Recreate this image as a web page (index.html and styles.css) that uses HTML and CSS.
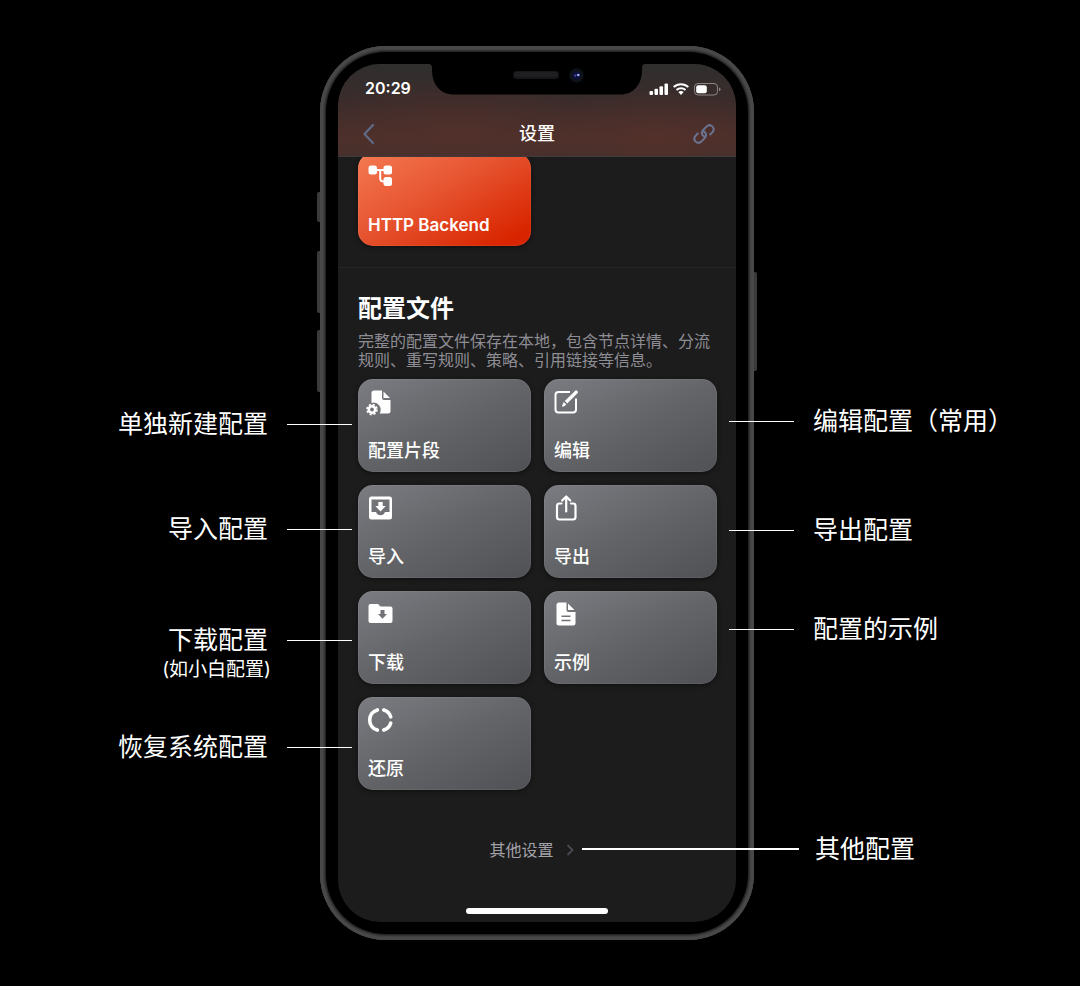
FILE: index.html
```html
<!DOCTYPE html>
<html lang="zh-CN">
<head>
<meta charset="utf-8">
<meta name="viewport" content="width=device-width, initial-scale=1">
<title>设置</title>
<link rel="stylesheet" href="styles.css">
</head>
<body>
<main class="stage">
  <div class="phone">
    <span class="key key-mute"></span>
    <span class="key key-up"></span>
    <span class="key key-down"></span>
    <span class="key key-power"></span>

    <div class="screen">
      <svg class="notch" viewBox="0 0 216 32" aria-hidden="true">
        <path d="M0 0H216Q213 0 213 4V6C213 20 205 30.500 191 30.500H25C11 30.500 3 20 3 6V4Q3 0 0 0Z" fill="#000"/>
        <rect x="84" y="7" width="46" height="8" rx="4" fill="#17171a"/>
        <rect x="85" y="8" width="44" height="5" rx="2.500" fill="#1f1f21"/>
        <circle cx="147.500" cy="11.500" r="7.200" fill="#0d1118"/>
        <circle cx="147.500" cy="11.500" r="4" fill="#0b0f35"/>
        <circle cx="146.200" cy="11.500" r="1.200" fill="#4a3a9a"/>
        <circle cx="149.300" cy="11" r="1.300" fill="#9fb2ff"/>
      </svg>

      <header class="topbar">
        <div class="status">
          <span class="time">20:29</span>
          <svg class="signals" viewBox="0 0 72 14" aria-hidden="true">
            <g fill="#fff">
              <rect x="0.500" y="9" width="3.500" height="4" rx="1"/>
              <rect x="5.500" y="6.800" width="3.500" height="6.200" rx="1"/>
              <rect x="10.500" y="4.200" width="3.500" height="8.800" rx="1"/>
              <rect x="15.500" y="1.500" width="3.500" height="11.500" rx="1"/>
              <path d="M32 8.900a4.100 4.100 0 0 1 2.700 1L32 12.900l-2.700-3a4.100 4.100 0 0 1 2.700-1Z"/>
            </g>
            <path d="M24.700 5.100a10.700 10.700 0 0 1 14.600 0M27.500 8a6.700 6.700 0 0 1 9 0" fill="none" stroke="#fff" stroke-width="2"/>
            <rect x="45.500" y="1.500" width="23" height="11.500" rx="3.500" fill="none" stroke="#8d8584"/>
            <rect x="47.200" y="3.200" width="10.600" height="8.100" rx="2" fill="#fff"/>
            <path d="M70 5.500v3.700q1.500-.5 1.500-1.850T70 5.500Z" fill="#8d8584"/>
          </svg>
        </div>
        <nav class="nav">
          <button class="nav-button" type="button" aria-label="返回">
            <svg class="nav-icon" viewBox="0 0 24 24"><path d="M16 3 7.500 12l8.500 9" fill="none" stroke="#606b8a" stroke-width="2.200" stroke-linecap="round" stroke-linejoin="round"/></svg>
          </button>
          <h1 class="title">设置</h1>
          <button class="nav-button" type="button" aria-label="链接">
            <svg class="nav-icon" viewBox="0 0 24 24"><g fill="none" stroke="#6b7390" stroke-width="2" stroke-linecap="round" stroke-linejoin="round"><path d="M11.700 14.800C8.900 13.800 8 10.300 10 8.200l3.700-3.800c3.800-3.500 9.200 1.600 5.800 5.700l-2.300 2.400"/><path d="M10.300 9.200c2.800 1 3.700 4.500 1.700 6.600l-3.700 3.800c-3.800 3.500-9.200-1.600-5.800-5.700l2.300-2.400"/></g></svg>
          </button>
        </nav>
      </header>

      <section class="backend">
        <div class="grid">
          <button class="card card-red" type="button">
            <svg class="icon" viewBox="0 0 24 24" fill="#fff"><rect x="0.500" y="1.500" width="8.500" height="9" rx="2.500"/><rect x="15.500" y="1.500" width="8.500" height="9" rx="2.500"/><rect x="15.500" y="13" width="8.500" height="9" rx="2.500"/><path d="M8.500 6H16M12.200 6v8.500q0 3 3.800 3" fill="none" stroke="#fff" stroke-width="2"/></svg>
            <span class="latin">HTTP Backend</span>
          </button>
        </div>
      </section>

      <section class="profile">
        <h2 class="heading">配置文件</h2>
        <p class="description">完整的配置文件保存在本地，包含节点详情、分流规则、重写规则、策略、引用链接等信息。</p>
        <div class="grid">
          <button class="card" type="button">
            <svg class="icon" viewBox="0 0 24 24"><path d="M6 .5h8V8a2 2 0 0 0 2 2h6.500v11a2.500 2.500 0 0 1-2.500 2.500h-8.500A7 7 0 0 0 3.500 13V3A2.500 2.500 0 0 1 6 .5ZM15.500 1.500V8H22Z" fill="#fff"/><circle cx="4" cy="19.500" r="3.200" fill="none" stroke="#fff" stroke-width="2.600"/><circle cx="4" cy="19.500" r="5" fill="none" stroke="#fff" stroke-width="1.600" stroke-dasharray="2.200 1.727"/></svg>
            <span>配置片段</span>
          </button>
          <button class="card" type="button">
            <svg class="icon" viewBox="0 0 24 24"><path d="M16 2H4.500q-3 0-3 3v14.500q0 3 3 3H19q3 0 3-3V8.500" fill="none" stroke="#fff" stroke-width="2"/><path d="M23.300.900a1.600 1.600 0 0 0-2.300 0L10.800 11.100l2.400 2.400L23.500 3.200a1.600 1.600 0 0 0-.2-2.300ZM9.800 12l2.500 2.500-2.100 1.800q-1.800.8-2.200-.200Z" fill="#fff"/></svg>
            <span>编辑</span>
          </button>
          <button class="card" type="button">
            <svg class="icon" viewBox="0 0 24 24"><path fill-rule="evenodd" d="M3.500.5h18A2.500 2.500 0 0 1 24 3v18a2.500 2.500 0 0 1-2.500 2.500h-18A2.500 2.500 0 0 1 1 21V3A2.500 2.500 0 0 1 3.500.5ZM3.500 3.500V16H8q1.300 3.200 4.500 3.200T17 16h4.500V3.500Z" fill="#fff"/><path d="M10.300 6h4.400v4h3L12.500 15.500 7.300 10h3Z" fill="#fff"/></svg>
            <span>导入</span>
          </button>
          <button class="card" type="button">
            <svg class="icon" viewBox="0 0 24 24"><path d="M7.500 7.500h-2Q3 7.500 3 10v11q0 2.500 2.500 2.500h13.500q2.500 0 2.500-2.500V10q0-2.500-2.500-2.500h-2M12.200 15.500V1M8.200 4.500l4-4 4 4" fill="none" stroke="#fff" stroke-width="2.200" stroke-linecap="round" stroke-linejoin="round"/></svg>
            <span>导出</span>
          </button>
          <button class="card" type="button">
            <svg class="icon" viewBox="0 0 24 24"><path fill-rule="evenodd" d="M2.500 2H10l2.500 2.500h10a2 2 0 0 1 2 2V19a2 2 0 0 1-2 2h-20a2 2 0 0 1-2-2V4a2 2 0 0 1 2-2ZM12.500 8v4H10l4.500 4.800 4.500-4.800h-2.500V8Z" fill="#fff"/></svg>
            <span>下载</span>
          </button>
          <button class="card" type="button">
            <svg class="icon" viewBox="0 0 24 24"><path fill-rule="evenodd" d="M5 .5h7.500V8a2 2 0 0 0 2 2h7v11a2.500 2.500 0 0 1-2.500 2.500H5A2.500 2.500 0 0 1 2.500 21V3A2.500 2.500 0 0 1 5 .5ZM14 1.500V8h6.500ZM7.500 13.500V15h9v-1.500ZM7.500 17.700v1.500h9v-1.500Z" fill="#fff"/></svg>
            <span>示例</span>
          </button>
          <button class="card" type="button">
            <svg class="icon" viewBox="0 0 24 24"><g fill="none" stroke="#fff" stroke-width="3.600" stroke-linecap="round"><path d="M9.300 1.900A10.500 10.500 0 0 0 9.300 22.100"/><path d="M15.800 2.100a10.300 10.300 0 0 1 6.900 6.700"/><path d="M15.800 21.900a10.300 10.300 0 0 0 6.900-6.700"/></g></svg>
            <span>还原</span>
          </button>
        </div>
      </section>

      <a class="more" href="#">
        <span>其他设置</span>
        <svg class="chevron" viewBox="0 0 8 12"><path d="m1.500 1 5 5-5 5" fill="none" stroke="#4a4952" stroke-width="1.800"/></svg>
      </a>
      <div class="home"></div>
    </div>

    <p class="note note-left note-snippet">单独新建配置</p>
    <p class="note note-left note-import">导入配置</p>
    <p class="note note-left note-download">下载配置</p>
    <p class="subnote">(如小白配置)</p>
    <p class="note note-left note-restore">恢复系统配置</p>
    <p class="note note-right note-edit">编辑配置（常用）</p>
    <p class="note note-right note-export">导出配置</p>
    <p class="note note-right note-sample">配置的示例</p>
    <p class="note note-right note-other">其他配置</p>
  </div>
</main>
</body>
</html>
```

FILE: styles.css
```css
* {
  box-sizing: border-box;
}

body {
  margin: 0;
  background: #000;
  color: #fff;
  font-family: Inter, "Noto Sans CJK SC", sans-serif;
}

h1, h2, p {
  margin: 0;
}

button {
  border: 0;
  padding: 0;
  background: none;
  color: inherit;
  font: inherit;
}

.stage {
  display: flex;
  justify-content: center;
  min-height: 100vh;
  padding: 46px 6px 46px 0;
}

.phone {
  position: relative;
  flex: none;
  width: 434px;
  padding: 18px;
  border-radius: 66px;
  background: #000;
  box-shadow: inset 0 0 0 3px #484848, inset 0 0 0 4px #404040, inset 0 0 0 5px #343434, inset 0 0 0 6px #242424;
}

.key {
  position: absolute;
  left: -3px;
  width: 3px;
  border-radius: 2px 0 0 2px;
  background: #3a3a3a;
}

.key-mute {
  top: 146px;
  height: 30px;
}

.key-up {
  top: 205px;
  height: 62px;
}

.key-down {
  top: 284px;
  height: 62px;
}

.key-power {
  top: 226px;
  left: 100%;
  height: 99px;
  border-radius: 0 2px 2px 0;
}

.screen {
  position: relative;
  display: flex;
  flex-direction: column;
  overflow: hidden;
  border-radius: 42px;
  background: #1c1c1d;
}

.notch {
  position: absolute;
  z-index: 2;
  top: 0;
  left: 91px;
  width: 216px;
  height: 32px;
}

.topbar {
  position: relative;
  z-index: 1;
  border-bottom: 1px solid #403a3a;
  background:
    radial-gradient(ellipse 150px 55px at 30% 74%, #59302980, transparent),
    radial-gradient(ellipse 120px 50px at 80% 80%, #5b302980, transparent),
    linear-gradient(#302e2e, #3a2c2b 40%, #4c302b 80%, #45302d);
}

.status {
  display: flex;
  align-items: center;
  justify-content: space-between;
  padding: 12px 15px 0 27px;
  font-size: 16px;
  font-weight: 600;
  line-height: 25px;
}

.signals {
  width: 72px;
  height: 14px;
}

.nav {
  display: flex;
  align-items: center;
  justify-content: space-between;
  padding: 15px 19px 4px;
}

.nav-button,
.nav-icon {
  display: block;
  width: 24px;
  height: 24px;
}

.nav-icon {
  overflow: visible;
}

.title {
  font-size: 18px;
  font-weight: 500;
  line-height: 36px;
}

.grid {
  display: grid;
  grid-template-columns: 1fr 1fr;
  gap: 13px;
}

.backend {
  margin-top: -4px;
  padding: 0 19px 21px 20px;
  border-bottom: 1px solid #262627;
}

.card {
  display: flex;
  flex-direction: column;
  align-items: flex-start;
  justify-content: space-between;
  height: 93px;
  padding: 11px 10px 8px;
  border-radius: 15px;
  background: linear-gradient(155deg, #7b7c81, #636468 50%, #505154);
  box-shadow: inset 0 0 0 1px #ffffff10, 0 1px 5px #00000080;
  font-size: 18px;
  font-weight: 500;
  line-height: 26px;
  text-align: left;
}

.card-red {
  background: linear-gradient(150deg, #f47a52, #e6532f 45%, #d82500 90%);
}

.latin {
  font-size: 17px;
  font-weight: 600;
}

.icon {
  width: 24px;
  height: 24px;
  overflow: visible;
}

.profile {
  padding: 23px 19px 0 20px;
}

.heading {
  font-size: 24px;
  font-weight: 700;
  line-height: 36px;
}

.description {
  margin: 5px 0 9px;
  color: #8e8d94;
  font-size: 16px;
  line-height: 19px;
}

.more {
  display: flex;
  align-items: center;
  align-self: center;
  gap: 12px;
  margin-top: 48px;
  padding-right: 11px;
  color: #a3a2a9;
  font-size: 16px;
  line-height: 24px;
  text-decoration: none;
}

.chevron {
  width: 8px;
  height: 12px;
}

.home {
  align-self: center;
  width: 142px;
  height: 6px;
  margin: 46px 0 8px;
  border-radius: 3px;
  background: #fff;
}

.note {
  position: absolute;
  display: flex;
  align-items: center;
  gap: 19px;
  font-size: 25px;
  line-height: 36px;
  white-space: nowrap;
}

.note::before,
.note::after {
  width: 65px;
  height: 1px;
  background: #fff;
}

.note-left {
  right: 402px;
}

.note-left::after {
  content: "";
}

.note-right {
  left: 409px;
}

.note-right::before {
  content: "";
}

.note-snippet {
  top: 360px;
}

.note-import {
  top: 465px;
}

.note-download {
  top: 576px;
}

.note-restore {
  top: 683px;
}

.subnote {
  position: absolute;
  top: 611px;
  right: 483px;
  font-size: 19px;
  line-height: 26px;
  white-space: nowrap;
}

.note-edit {
  top: 357px;
}

.note-export {
  top: 466px;
}

.note-sample {
  top: 565px;
}

.note-other {
  top: 785px;
  left: 262px;
  gap: 16px;
}

.note-other::before {
  width: 217px;
  height: 2px;
}
```
